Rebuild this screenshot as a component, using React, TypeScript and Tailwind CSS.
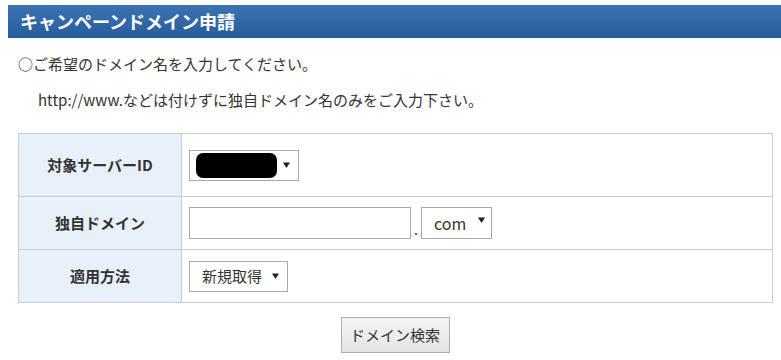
const font = { fontFamily: '"Noto Sans CJK JP", "Noto Sans", sans-serif' }

function Arrow() {
  return (
    <svg width="7" height="6" viewBox="0 0 7 6" className="block">
      <path d="M0 0.5 L7 0.5 L3.5 6 Z" fill="#222" />
    </svg>
  )
}

function FakeSelect({ width, children }: { width: string; children: React.ReactNode }) {
  return (
    <div className={`flex h-[31px] items-center justify-between border border-[#a9a9a9] bg-white pl-[6px] pr-[8px] ${width}`}>
      <div className="flex items-center">{children}</div>
      <Arrow />
    </div>
  )
}

export default function App() {
  return (
    <div className="min-h-[360px] w-[781px] bg-white text-[#333]" style={font}>
      <div className="pt-[5px] pl-[8px]">
        <div className="flex h-[33px] items-center bg-gradient-to-b from-[#3b74b3] to-[#285c9c] pl-[12px]">
          <h1 className="text-[18px] font-bold text-white">キャンペーンドメイン申請</h1>
        </div>
      </div>

      <p className="mt-[16px] pl-[18px] text-[15px] leading-[20px]">○ご希望のドメイン名を入力してください。</p>
      <p className="mt-[16px] pl-[38px] text-[15px] leading-[20px]">http://www.などは付けずに独自ドメイン名のみをご入力下さい。</p>

      <div className="mt-[23px] pl-[18px]">
        <table className="w-[755px] border-collapse text-[15px]">
          <tbody>
            <tr className="h-[63px]">
              <th className="w-[163px] border border-[#ccc] bg-[#e8f0f9] font-bold">対象サーバーID</th>
              <td className="border border-[#ccc] pl-[7px]">
                <FakeSelect width="w-[110px]">
                  <div className="h-[25px] w-[81px] rounded-[7px] bg-black" />
                </FakeSelect>
              </td>
            </tr>
            <tr className="h-[53px]">
              <th className="border border-[#ccc] bg-[#e8f0f9] font-bold">独自ドメイン</th>
              <td className="border border-[#ccc] pl-[7px]">
                <div className="flex items-end">
                  <div className="h-[32px] w-[222px] border border-[#a9a9a9] bg-white" />
                  <span className="mx-[3px] pb-[3px] text-[14px] leading-none">.</span>
                  <div className="flex h-[32px] w-[71px] items-center justify-between border border-[#a9a9a9] bg-white pl-[12px] pr-[6px]">
                    <span className="text-[16px]">com</span>
                    <span className="-mt-[6px]"><Arrow /></span>
                  </div>
                </div>
              </td>
            </tr>
            <tr className="h-[53px]">
              <th className="border border-[#ccc] bg-[#e8f0f9] font-bold">適用方法</th>
              <td className="border border-[#ccc] pl-[7px]">
                <FakeSelect width="w-[99px]">
                  <span className="pl-[6px] text-[15px]">新規取得</span>
                </FakeSelect>
              </td>
            </tr>
          </tbody>
        </table>
      </div>

      <div className="mt-[14px] flex w-[790px] justify-center">
        <button className="h-[36px] w-[109px] border border-[#adadad] bg-gradient-to-b from-[#f4f4f4] to-[#e4e4e4] text-[15px] text-[#333]">
          ドメイン検索
        </button>
      </div>
    </div>
  )
}
